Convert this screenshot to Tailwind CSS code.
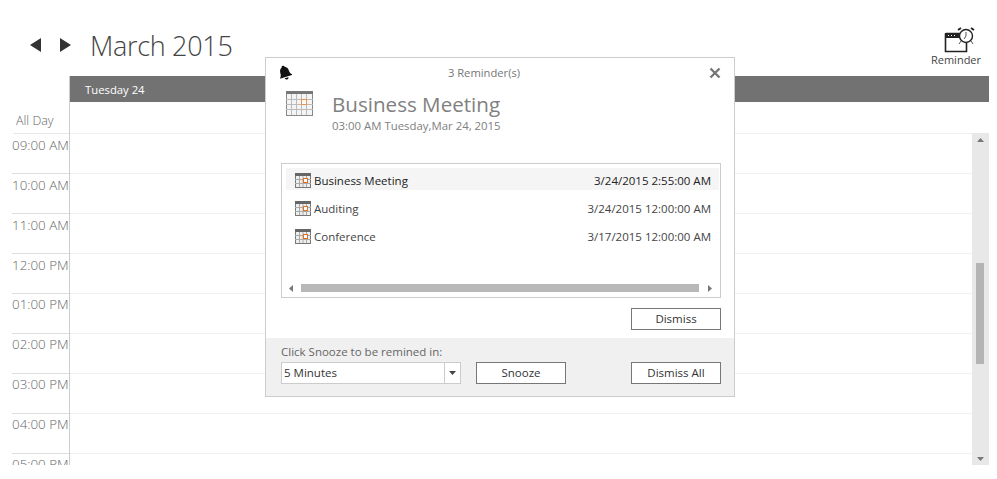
<!DOCTYPE html>
<html lang="en">
<head>
  <meta charset="UTF-8" />
  <title>Schedule Reminder</title>
  <script src="https://cdn.jsdelivr.net/npm/@tailwindcss/browser@4"></script>
</head>
<body class="bg-white font-['Open_Sans','Noto_Sans',sans-serif] text-[#333] h-[479px] w-[997px] overflow-hidden relative">

  <!-- toolbar -->
  <header class="h-[76px] flex items-start">
    <div class="flex items-center pl-[30px] pt-[30px] h-[60px]">
      <svg width="12" height="14" viewBox="0 0 12 14" class="mr-[17px]"><path d="M11 0v14L0 7z" fill="#333" /></svg>
      <svg width="12" height="14" viewBox="0 0 12 14" class="mr-[19px]"><path d="M1 0v14l11-7z" fill="#333" /></svg>
      <span class="text-[27px] tracking-[-0.3px] leading-none font-light text-[#444]">March 2015</span>
    </div>
    <div class="ml-auto mr-[15px] mt-[27px] flex flex-col items-center w-[52px]">
      <svg width="32" height="26" viewBox="0 0 32 26" class="ml-[8px]">
        <path d="M1.500 6.500h15M1.500 6.500v18h21v-10" fill="none" stroke="#222" stroke-width="1.600" />
        <rect x="1" y="6" width="17" height="5" fill="#222" />
        <path d="M4 8.500h1M7 8.500h1M10 8.500h1" stroke="#fff" />
        <path d="M17 14l-2 3M27 14l2 3" stroke="#555" />
        <circle cx="22" cy="9" r="6.500" fill="#fff" stroke="#222" stroke-width="1.400" />
        <path d="M22 5v4l-2 3" fill="none" stroke="#555" />
        <path d="M14 3l3-2M27 1l3 2" stroke="#222" stroke-width="2" />
      </svg>
      <span class="text-[11px] leading-[14px] text-[#444]">Reminder</span>
    </div>
  </header>

  <!-- calendar -->
  <div class="flex items-start pr-[8px] h-[390px] overflow-hidden">
    <div class="w-[70px] h-[389px] shrink-0 flex flex-col font-light text-[#666] pl-[13px] border-r border-[#ccc]">
      <div class="h-[26px] shrink-0"></div>
      <div class="h-[32px] shrink-0 border-b border-[#e8e8e8] pt-[10px] pl-[3px] text-[12.500px] leading-[17px]">All Day</div>
      <div class="h-[40px] shrink-0 border-b border-[#ddd] text-[13.400px] leading-[16px] pt-[3px] whitespace-nowrap -ml-[1px]">09:00 AM</div>
      <div class="h-[40px] shrink-0 border-b border-[#ddd] text-[13.400px] leading-[16px] pt-[3px] whitespace-nowrap -ml-[1px]">10:00 AM</div>
      <div class="h-[40px] shrink-0 border-b border-[#ddd] text-[13.400px] leading-[16px] pt-[3px] whitespace-nowrap -ml-[1px]">11:00 AM</div>
      <div class="h-[40px] shrink-0 border-b border-[#ddd] text-[13.400px] leading-[16px] pt-[3px] whitespace-nowrap -ml-[1px]">12:00 PM</div>
      <div class="h-[40px] shrink-0 border-b border-[#ddd] text-[13.400px] leading-[16px] pt-[2px] whitespace-nowrap -ml-[1px]">01:00 PM</div>
      <div class="h-[40px] shrink-0 border-b border-[#ddd] text-[13.400px] leading-[16px] pt-[2px] whitespace-nowrap -ml-[1px]">02:00 PM</div>
      <div class="h-[40px] shrink-0 border-b border-[#ddd] text-[13.400px] leading-[16px] pt-[2px] whitespace-nowrap -ml-[1px]">03:00 PM</div>
      <div class="h-[40px] shrink-0 border-b border-[#ddd] text-[13.400px] leading-[16px] pt-[2px] whitespace-nowrap -ml-[1px]">04:00 PM</div>
      <div class="h-[11px] overflow-hidden text-[13.400px] leading-[16px] pt-[2px] whitespace-nowrap -ml-[1px]">05:00 PM</div>
    </div>
    <div class="flex-1 flex flex-col h-[390px]">
      <div class="h-[26px] bg-[#727272] text-white text-[11.300px] leading-[27px] pl-[15px] shrink-0">Tuesday 24</div>
      <div class="h-[32px] border-b border-[#f0f0f0] shrink-0"></div>
      <div class="flex overflow-hidden h-[332px] -mt-[1px] pt-[1px]">
        <div class="flex-1">
          <div class="h-[40px] border-b border-[#f0f0f0]"></div>
          <div class="h-[40px] border-b border-[#f0f0f0]"></div>
          <div class="h-[40px] border-b border-[#f0f0f0]"></div>
          <div class="h-[40px] border-b border-[#f0f0f0]"></div>
          <div class="h-[40px] border-b border-[#f0f0f0]"></div>
          <div class="h-[40px] border-b border-[#f0f0f0]"></div>
          <div class="h-[40px] border-b border-[#f0f0f0]"></div>
          <div class="h-[40px] border-b border-[#f0f0f0]"></div>
        </div>
        <div class="w-[17px] bg-[#e8e8e8] h-[333px] -mt-[1px] flex flex-col items-center shrink-0">
          <svg width="7" height="4" viewBox="0 0 7 4" class="mt-[5px]"><path d="M3.500 0L7 4H0z" fill="#777" /></svg>
          <div class="w-[8px] h-[101px] bg-[#b4b4b4] mt-[121px] -ml-[1px]"></div>
          <svg width="7" height="4" viewBox="0 0 7 4" class="mt-[93px]"><path d="M0 0h7L3.500 4z" fill="#777" /></svg>
        </div>
      </div>
    </div>
  </div>

  <!-- reminder dialog -->
  <div class="absolute left-[265px] top-[57px] w-[470px] h-[340px] bg-white border border-[#ccc] flex flex-col">
    <div class="h-[26px] relative flex justify-center items-center pt-[4px] pr-[32px] shrink-0">
      <svg width="14" height="16" viewBox="0 0 14 16" class="absolute left-[12px] top-[7px]">
        <g transform="rotate(-18 7 8)" fill="#111">
          <path d="M7 .5c1 0 1.600.7 1.600 1.500C10.700 2.800 11.500 5 11.500 7c0 2.500 1 3.500 2.200 5H.3c1.200-1.500 2.200-2.500 2.200-5C2.500 5 3.300 2.800 5.400 2 5.400 1.200 6 .5 7 .5z" />
          <path d="M5 13c0 2.200 4 2.200 4 0z" />
        </g>
      </svg>
      <span class="text-[11.200px] text-[#777]">3 Reminder(s)</span>
      <svg width="12" height="12" viewBox="0 0 12 12" class="absolute right-[13px] top-[9px]"><path d="M1.500 1.500l9 9M10.500 1.500l-9 9" stroke="#777" stroke-width="2.400" /></svg>
    </div>
    <div class="h-[79px] flex pl-[20px] shrink-0">
      <svg width="27" height="25" viewBox="0 0 27 25" class="mt-[7px]">
        <rect x=".5" y=".5" width="26" height="24" fill="#f4f4f4" stroke="#888" />
        <rect width="27" height="3" fill="#777" />
        <path d="M5.500 3v21M10.500 3v21M15.500 3v21M20.500 3v21M0 8.500h27M0 13.500h27M0 18.500h27" stroke="#bbb" />
        <rect x="15.500" y="8.500" width="5" height="5" fill="#fff" stroke="#e8954a" />
      </svg>
      <div class="pl-[19px]">
        <div class="text-[20.600px] leading-[28px] mt-[6px] text-[#808080]">Business Meeting</div>
        <div class="text-[11.400px] leading-[14px] mt-[1px] text-[#808080]">03:00 AM Tuesday,Mar 24, 2015</div>
      </div>
    </div>
    <div class="ml-[15px] mr-[13px] h-[135px] border border-[#ccc] flex flex-col shrink-0 text-[11.500px]">
      <div class="pt-[4px] flex-1 pl-[4px] pr-[1px]">
        <div class="h-[22px] mb-[6px] pt-[4px] bg-[#f5f5f5] flex items-center pl-[9px] pr-[8px] text-[#222]">
          <svg width="16" height="15" viewBox="0 0 16 15" class="mr-[3px] -mt-[2px]"><rect x=".5" y=".5" width="15" height="14" fill="#eee" stroke="#777" /><rect width="16" height="3" fill="#666" /><path d="M4.500 3v11M8 3v11M11.500 3v11M0 6.500h16M0 10.500h16" stroke="#aaa" /><rect x="8.500" y="5.500" width="4" height="4" fill="#fff" stroke="#e07020" /></svg>
          <span>Business Meeting</span><span class="ml-auto">3/24/2015 2:55:00 AM</span>
        </div>
        <div class="h-[22px] mb-[6px] pt-[4px] flex items-center pl-[9px] pr-[8px] text-[#444]">
          <svg width="16" height="15" viewBox="0 0 16 15" class="mr-[3px] -mt-[2px]"><rect x=".5" y=".5" width="15" height="14" fill="#eee" stroke="#777" /><rect width="16" height="3" fill="#666" /><path d="M4.500 3v11M8 3v11M11.500 3v11M0 6.500h16M0 10.500h16" stroke="#aaa" /><rect x="8.500" y="5.500" width="4" height="4" fill="#fff" stroke="#e07020" /></svg>
          <span>Auditing</span><span class="ml-auto">3/24/2015 12:00:00 AM</span>
        </div>
        <div class="h-[22px] pt-[4px] flex items-center pl-[9px] pr-[8px] text-[#444]">
          <svg width="16" height="15" viewBox="0 0 16 15" class="mr-[3px] -mt-[2px]"><rect x=".5" y=".5" width="15" height="14" fill="#eee" stroke="#777" /><rect width="16" height="3" fill="#666" /><path d="M4.500 3v11M8 3v11M11.500 3v11M0 6.500h16M0 10.500h16" stroke="#aaa" /><rect x="8.500" y="5.500" width="4" height="4" fill="#fff" stroke="#e07020" /></svg>
          <span>Conference</span><span class="ml-auto">3/17/2015 12:00:00 AM</span>
        </div>
      </div>
      <div class="h-[8px] mb-[5px] flex items-center pl-[7px] pr-[8px] gap-[8px]">
        <svg width="4" height="7" viewBox="0 0 4 7"><path d="M4 0v7L0 3.500z" fill="#777" /></svg>
        <div class="flex-1 h-[8px] bg-[#b8b8b8]"></div>
        <svg width="4" height="7" viewBox="0 0 4 7" class="ml-[1px]"><path d="M0 0v7l4-3.500z" fill="#777" /></svg>
      </div>
    </div>
    <div class="flex justify-end pr-[13px] pt-[10px] h-[40px] shrink-0">
      <button class="w-[90px] h-[22px] border border-[#777] bg-white text-[11.500px] leading-none text-[#333]">Dismiss</button>
    </div>
    <div class="flex-1 bg-[#f0f0f0] px-[15px] pt-[6px]">
      <div class="text-[11.500px] leading-[16px] text-[#666]">Click Snooze to be remined in:</div>
      <div class="flex mt-[2px]">
        <div class="w-[180px] h-[22px] bg-white border border-[#ccc] flex items-center pl-[2px] text-[11.500px] text-[#333]">
          <span class="flex-1">5 Minutes</span>
          <div class="w-[16px] h-full border-l border-[#ccc] flex items-center justify-center">
            <svg width="7" height="4" viewBox="0 0 7 4"><path d="M0 0h7L3.500 4z" fill="#444" /></svg>
          </div>
        </div>
        <button class="ml-[15px] w-[90px] h-[22px] border border-[#777] bg-white text-[11.500px] leading-none text-[#333]">Snooze</button>
        <button class="ml-auto mr-[-2px] w-[90px] h-[22px] border border-[#777] bg-white text-[11.500px] leading-none text-[#333]">Dismiss All</button>
      </div>
    </div>
  </div>
</body>
</html>
